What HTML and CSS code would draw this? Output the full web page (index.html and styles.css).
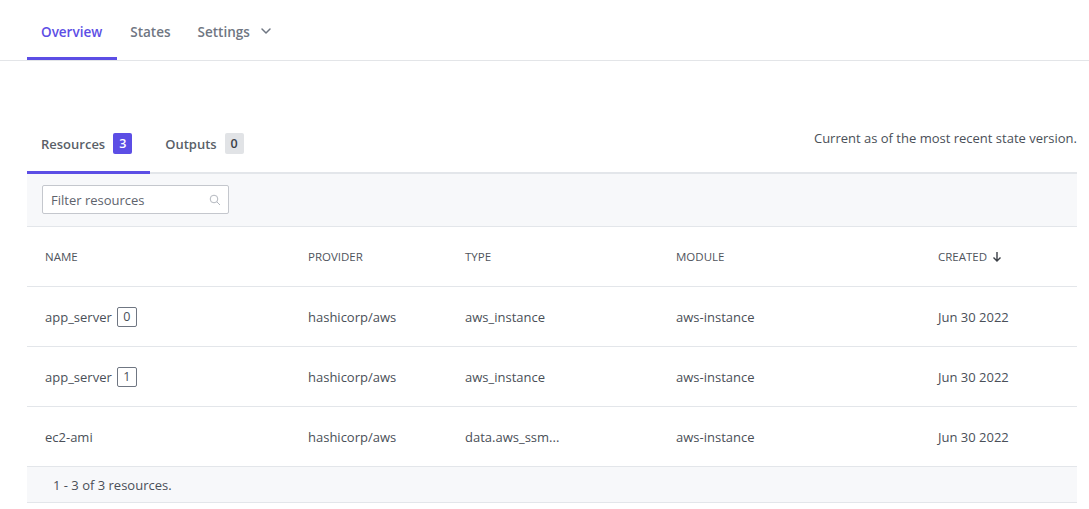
FILE: index.html
```html
<!DOCTYPE html>
<html>
<head>
<meta charset="utf-8">
<link rel="stylesheet" href="styles.css">
</head>
<body>
<nav class="topnav">
  <a class="topnav-tab active">Overview</a>
  <a class="topnav-tab">States</a>
  <a class="topnav-tab">Settings
    <svg class="chev" width="12" height="12" viewBox="0 0 12 12"><path d="M2 4l4 4 4-4" fill="none" stroke="#6f7682" stroke-width="1.5" stroke-linecap="round" stroke-linejoin="round"/></svg>
  </a>
</nav>

<main class="content">
  <div class="subhead">
    <div class="subtabs">
      <a class="subtab active">Resources <span class="count count-primary">3</span></a>
      <a class="subtab">Outputs <span class="count count-muted">0</span></a>
    </div>
    <p class="note">Current as of the most recent state version.</p>
  </div>

  <section class="panel">
    <div class="filterbar">
      <label class="search">
        <span class="placeholder">Filter resources</span>
        <svg class="search-icon" width="12" height="12" viewBox="0 0 12 12"><circle cx="5" cy="5" r="3.8" fill="none" stroke="#b4b8bf" stroke-width="1"/><path d="M7.8 7.8l3.2 3.2" stroke="#b4b8bf" stroke-width="1"/></svg>
      </label>
    </div>

    <div class="row head">
      <div>NAME</div>
      <div>PROVIDER</div>
      <div>TYPE</div>
      <div>MODULE</div>
      <div class="sort">CREATED
        <svg width="10" height="12" viewBox="0 0 10 12"><path d="M5 1v9M1.5 6.5L5 10l3.5-3.5" fill="none" stroke="#3b3f46" stroke-width="1.4"/></svg>
      </div>
    </div>
    <div class="row">
      <div class="name">app_server <span class="idx">0</span></div>
      <div>hashicorp/aws</div>
      <div>aws_instance</div>
      <div>aws-instance</div>
      <div>Jun 30 2022</div>
    </div>
    <div class="row">
      <div class="name">app_server <span class="idx">1</span></div>
      <div>hashicorp/aws</div>
      <div>aws_instance</div>
      <div>aws-instance</div>
      <div>Jun 30 2022</div>
    </div>
    <div class="row">
      <div class="name">ec2-ami</div>
      <div>hashicorp/aws</div>
      <div>data.aws_ssm...</div>
      <div>aws-instance</div>
      <div>Jun 30 2022</div>
    </div>
    <div class="footer">1 - 3 of 3 resources.</div>
  </section>
</main>
</body>
</html>
```

FILE: styles.css
```css
* { box-sizing: border-box; }
html, body { margin: 0; padding: 0; background: #fff; }
body {
  font-family: "Open Sans", "Noto Sans", sans-serif;
  color: #4a4f58;
  font-size: 13px;
}
.topnav {
  display: flex;
  height: 61px;
  padding-left: 27px;
  border-bottom: 1px solid #e3e5e8;
}
.topnav-tab {
  display: flex;
  align-items: center;
  gap: 10px;
  padding: 6px 14px 0;
  height: 60px;
  font-size: 13.5px;
  font-weight: 600;
  color: #6f7682;
  border-bottom: 3px solid transparent;
}
.topnav-tab.active { color: #5c4ee5; border-bottom-color: #5c4ee5; padding-right: 15px; }
.topnav-tab + .topnav-tab { padding-left: 13px; }
.topnav-tab .chev { margin-top: -2px; }

.content { padding: 0 12px 0 27px; }
.subhead {
  display: flex;
  justify-content: space-between;
  align-items: flex-end;
  margin-top: 61px;
  border-bottom: 2px solid #e3e6ea;
}
.subtabs { display: flex; }
.subtab {
  display: flex;
  align-items: center;
  gap: 8px;
  padding: 0 18px 6px 14px;
  height: 52px;
  margin-bottom: -2px;
  font-size: 13px;
  font-weight: 600;
  color: #5a5f68;
  border-bottom: 3px solid transparent;
}
.subtab.active { border-bottom-color: #5c4ee5; }
.subtab + .subtab { padding-left: 15px; }
.count {
  display: inline-flex;
  align-items: center;
  justify-content: center;
  width: 19px;
  height: 21px;
  border-radius: 2px;
  font-size: 12.5px;
  font-weight: 600;
}
.count-primary { background: #5c4ee5; color: #fff; }
.count-muted { background: #e1e3e6; color: #3b3f46; }
.note {
  margin: 0 0 25px;
  font-size: 13px;
  color: #4a4f58;
}

.filterbar {
  background: #f7f8fa;
  padding: 11px 15px 12px;
  border-bottom: 1px solid #e3e6ea;
}
.search {
  display: flex;
  align-items: center;
  justify-content: space-between;
  width: 187px;
  height: 29px;
  padding: 0 7px 0 8px;
  background: #fff;
  border: 1px solid #c4c7cd;
  border-radius: 2px;
}
.placeholder { color: #5e636c; font-size: 13px; }

.row {
  display: grid;
  grid-template-columns: 263px 157px 211px 262px 1fr;
  align-items: center;
  height: 60px;
  padding-left: 18px;
  border-bottom: 1px solid #e3e6ea;
  font-size: 13px;
}
.row.head { font-size: 11.5px; color: #4f545c; }
.sort { display: flex; align-items: center; gap: 5px; }
.name { display: flex; align-items: center; gap: 5px; }
.idx {
  display: inline-flex;
  align-items: center;
  justify-content: center;
  width: 20px;
  height: 20px;
  border: 1px solid #6f7682;
  border-radius: 2px;
  font-size: 12.5px;
}
.row:last-of-type { border-bottom: 2px solid #dfe2e6; }
.footer {
  background: #f7f8fa;
  height: 36px;
  display: flex;
  align-items: center;
  padding-left: 26px;
  border-bottom: 1px solid #e3e6ea;
  font-size: 13px;
}
```
